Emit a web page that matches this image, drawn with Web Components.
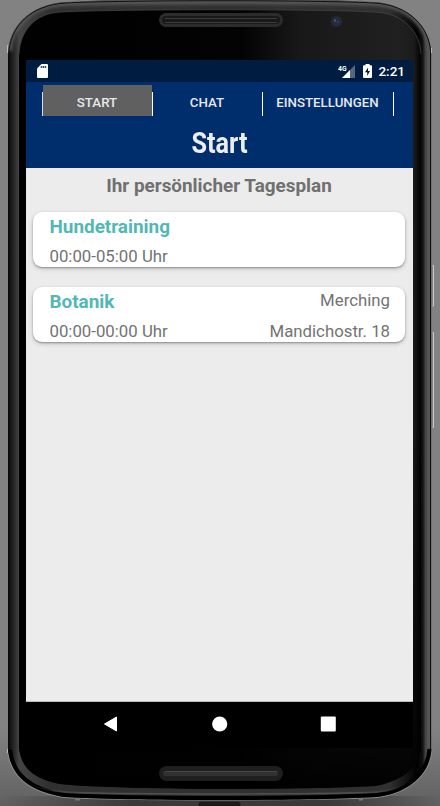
<!DOCTYPE html>
<html lang="de">
<head>
<meta charset="utf-8">
<title>Start</title>
<style>
html,body{margin:0;width:440px;height:806px;overflow:hidden;background:#828282;font-family:Roboto,"Liberation Sans",sans-serif}
</style>
</head>
<body>
<phone-device>
  <status-bar slot="screen" time="2:21"></status-bar>
  <app-header slot="screen" heading="Start">
    <nav-tab active style="width:110px">START</nav-tab>
    <nav-tab style="width:110px">CHAT</nav-tab>
    <nav-tab style="width:131px">EINSTELLUNGEN</nav-tab>
  </app-header>
  <day-plan slot="screen" heading="Ihr persönlicher Tagesplan">
    <plan-card><span slot="title">Hundetraining</span><span slot="time">00:00-05:00 Uhr</span></plan-card>
    <plan-card><span slot="title">Botanik</span><span slot="time">00:00-00:00 Uhr</span><span slot="city">Merching</span><span slot="street">Mandichostr. 18</span></plan-card>
  </day-plan>
  <nav-buttons slot="screen"></nav-buttons>
</phone-device>
<script>
const define = (name, render) => customElements.define(name, class extends HTMLElement {
  constructor() {
    super();
    this.attachShadow({mode: 'open'}).innerHTML = render(this);
  }
});

define('phone-device', () => `
<style>
:host{display:grid;width:440px;height:806px}
svg{grid-area:1/1;display:block}
main{grid-area:1/1;margin:60px 27px 58px 26px;display:flex;flex-direction:column;min-height:0;background:#000;z-index:1}
</style>
<svg width="440" height="806" viewBox="0 0 440 806">
  <defs>
    <linearGradient id="rim" x1="8" x2="432" y1="0" y2="0" gradientUnits="userSpaceOnUse">
      <stop offset="0" stop-color="#080808"/><stop offset=".006" stop-color="#151515"/><stop offset=".019" stop-color="#333"/><stop offset=".026" stop-color="#444"/>
      <stop offset=".1" stop-color="#303030"/><stop offset=".9" stop-color="#303030"/>
      <stop offset=".965" stop-color="#000"/><stop offset=".978" stop-color="#111"/><stop offset=".985" stop-color="#444"/><stop offset=".993" stop-color="#5a5a5a"/><stop offset="1" stop-color="#333"/>
    </linearGradient>
    <linearGradient id="glass" x1="0" x2="440" y1="0" y2="0" gradientUnits="userSpaceOnUse">
      <stop offset="0" stop-color="#000"/><stop offset=".55" stop-color="#030303"/><stop offset=".68" stop-color="#181818"/><stop offset=".9" stop-color="#1f201f"/><stop offset=".94" stop-color="#1b1c1b"/><stop offset=".958" stop-color="#000"/>
    </linearGradient>
    <linearGradient id="fade" x1="0" x2="0" y1="420" y2="800" gradientUnits="userSpaceOnUse">
      <stop offset="0" stop-color="#000" stop-opacity="0"/><stop offset=".85" stop-color="#000" stop-opacity=".8"/><stop offset="1" stop-color="#000"/>
    </linearGradient>
    <linearGradient id="floor" x1="0" x2="0" y1="730" y2="806" gradientUnits="userSpaceOnUse">
      <stop offset="0" stop-color="#828282"/><stop offset="1" stop-color="#606060"/>
    </linearGradient>
    <linearGradient id="under" x1="0" x2="440" y1="0" y2="0" gradientUnits="userSpaceOnUse">
      <stop offset="0" stop-color="#333" stop-opacity="0"/><stop offset=".3" stop-color="#333" stop-opacity=".85"/><stop offset=".75" stop-color="#333" stop-opacity=".85"/><stop offset="1" stop-color="#333" stop-opacity="0"/>
    </linearGradient>
    <linearGradient id="lip" x1="30" x2="410" y1="0" y2="0" gradientUnits="userSpaceOnUse">
      <stop offset="0" stop-color="#555" stop-opacity="0"/><stop offset=".15" stop-color="#505050"/><stop offset=".85" stop-color="#505050"/><stop offset="1" stop-color="#555" stop-opacity="0"/>
    </linearGradient>
    <filter id="soft" x="-10%" y="-20%" width="120%" height="140%"><feGaussianBlur stdDeviation="1.6"/></filter>
    <clipPath id="body"><path id="shape" d="M8 53C9 27 29 4 66 2C120-1 170-2 220-2S320-1 374 2C409 4 430 27 431.500 53V749C430 774 409 793 377 797C340 799 290 800 220 800S100 799 64 797C29 791 11 776 8 750Z"/></clipPath>
  </defs>
  <rect width="440" height="806" fill="#828282"/>
  <rect y="730" width="440" height="76" fill="url(#floor)"/>
  <rect y="796" width="440" height="10" fill="url(#under)"/>
  <path d="M7.500 750C10 777 29 792 64 797.500C110 800.800 330 800.800 377 797.500C409 793.500 430 775 432 750" fill="none" stroke="#8c8c8c" stroke-width="1"/>
  <g clip-path="url(#body)">
    <use href="#shape" fill="url(#rim)"/>
    <path d="M8 51C9 27 29 3 66 2C120 0 320 0 374 2C409 3 430 27 431 51" fill="none" stroke="#555" stroke-width="8" filter="url(#soft)"/>
    <path d="M19 54C20 31 35 13 61 12C120 9 320 9 374 12C404 13 420 32 421 54V748C419 768 404 780 376 786C310 790 120 790 60 784C35 779 21 769 19 747Z" fill="url(#glass)"/>
    <path d="M19 54C20 31 35 13 61 12C120 9 320 9 374 12C404 13 420 32 421 54" fill="none" stroke="#494949" stroke-width=".7"/>
    <path d="M19 420H421V748C419 768 404 780 376 786C310 790 120 790 60 784C35 779 21 769 19 747Z" fill="url(#fade)"/>
    <path d="M8 750C11 776 29 791 64 797C100 799 150 800 220 800S340 799 377 797C409 793 430 774 431.500 749" fill="none" stroke="#000" stroke-width="8"/>
    <path d="M30 784Q45 791 66 792C110 794.500 330 794.500 376 792Q395 791 410 782" fill="none" stroke="url(#lip)" stroke-width="1.500"/>
  </g>
  <path d="M9 53C10 27 30 5 66 3C120 0 320 0 374 3C409 5 429 27 430.500 51V749" fill="none" stroke="#111" stroke-width="1"/>
  <g>
    <rect x="159" y="13" width="124" height="14" rx="7" fill="#2c2c2c"/><rect x="162" y="16" width="118" height="8" rx="4" fill="#191919"/><path d="M165 18.500H277M165 22.500H277" stroke="#3b3b3b"/>
    <rect x="159" y="766" width="124" height="15" rx="7.500" fill="#1f1f1f"/><rect x="163" y="771" width="115" height="5" rx="2.500" fill="#303030"/><path d="M165 771.500H277" stroke="#474747"/>
  </g>
  <circle cx="336.500" cy="21.500" r="5.800" fill="#282828"/><circle cx="336.500" cy="21.500" r="3.700" fill="#202a49"/><circle cx="335" cy="20.500" r="1.200" fill="#3e5582"/><circle cx="338" cy="22" r="1" fill="#34466e"/>
  <path d="M432.500 265.500H433.500V306H432.500M432.500 332.500H433.500V427.500H432.500" fill="none" stroke="#c9c9c9"/>
  <path d="M199 806V803.500Q199 802 201 802H238Q240 802 240 804V806Z" fill="#1c1c1c" stroke="#111" stroke-width=".5"/>
  <path d="M7.500 45V53M431.500 48V53M7.500 749V753" stroke="#bbb"/>
  <path d="M77 .5H81M358 .5H362M75 799.500H80M359 799.500H363" stroke="#777" stroke-width="2"/>
</svg>
<main><slot name="screen"></slot></main>`);

define('status-bar', el => `
<style>
:host{display:flex;height:22px;flex:none;align-items:center;background:#001c41;color:#fff;padding:0 8px 0 11px;box-sizing:border-box}
svg{display:block;flex:none}
.sd{margin-right:auto}
.time{font-size:13.500px;font-weight:500;line-height:22px;margin-left:6px}
</style>
<svg class="sd" width="11" height="14" viewBox="0 0 11 14"><path fill="#fff" d="M4.500 0H10Q11 0 11 1V13Q11 14 10 14H1Q0 14 0 13V4.500Z"/><path d="M4.500 2V4M6.500 2V4M8.500 2V4" stroke="#38506f" stroke-width="1.500"/></svg>
<svg width="18" height="15" viewBox="0 0 18 15"><path d="M17 1V14H4Z" fill="#56677f"/><path d="M12 6V14H4Z" fill="#fff"/><text x="0" y="6.500" font-size="8" font-weight="700" fill="#fff" textLength="8.500" lengthAdjust="spacingAndGlyphs">4G</text></svg>
<svg style="margin-left:7px" width="9" height="14" viewBox="0 0 9 14"><path fill="#fff" d="M2.500 0H6.500V1.300H8Q9 1.300 9 2.300V13Q9 14 8 14H1Q0 14 0 13V2.300Q0 1.300 1 1.300H2.500Z"/><path d="M5 3.500L2 8.300H4.200V12L7 7H5Z" fill="#001c41"/></svg>
<span class="time">${el.getAttribute('time')}</span>`);

define('app-header', el => `
<style>
:host{display:flex;flex-direction:column;flex:none;height:86px;background:#002d6b;color:#ededed;overflow:hidden}
nav{display:flex;margin:3px 0 0 15.500px;height:31px}
nav::before{content:"";width:1px;margin-top:7px;background:#d5dce6}
h1{margin:10px 0 0;font-size:29px;line-height:34px;font-weight:700;text-align:center;transform:scaleX(.87)}
</style>
<nav><slot></slot></nav><h1>${el.getAttribute('heading')}</h1>`);

define('nav-tab', () => `
<style>
:host{display:flex;flex:none;height:31px;font-size:13.300px;font-weight:500;line-height:35px;color:#e6e8ec}
:host([active]) span{background:#606060}
span{flex:1;text-align:center}
:host::after{content:"";width:1px;margin-top:7px;background:#fff}
</style>
<span><slot></slot></span>`);

define('day-plan', el => `
<style>
:host{display:flex;flex-direction:column;flex:none;height:534px;background:#ececec;padding:0 8px 0 7px;box-sizing:border-box;border-bottom:1px solid #bbb}
h2{margin:6px 0 14px;height:24px;font-size:18.900px;line-height:24px;font-weight:700;color:#707070;text-align:center}
section{display:flex;flex-direction:column;gap:19.500px}
</style>
<h2>${el.getAttribute('heading')}</h2><section><slot></slot></section>`);

define('plan-card', () => `
<style>
:host{display:grid;grid-template-columns:1fr auto;grid-template-rows:30px 25px;height:55.300px;box-sizing:border-box;padding:0 15px 0 16.500px;background:#fff;border-radius:9px;box-shadow:0 1px 2px rgba(0,0,0,.32),0 2px 5px rgba(0,0,0,.16);color:#737373;font-size:16.800px;line-height:28px;white-space:nowrap}
b{color:#51b8b5;font-size:18.900px;font-weight:700;line-height:30px}
.right{text-align:right}
.city{line-height:26px}
</style>
<b><slot name="title"></slot></b><div class="right city"><slot name="city"></slot></div>
<div><slot name="time"></slot></div><div class="right"><slot name="street"></slot></div>`);

define('nav-buttons', () => `
<style>
:host{display:flex;flex:1;align-items:center;justify-content:space-between;padding:0 77px 2px 77px}
svg{display:block}
</style>
<svg width="16" height="16" viewBox="0 0 16 16"><path d="M1.500 8L13.500 1V15Z" fill="#fff" stroke="#fff" stroke-width="1" stroke-linejoin="round"/></svg>
<svg width="16" height="16" viewBox="0 0 16 16"><circle cx="7.700" cy="8" r="7.600" fill="#fff"/></svg>
<svg width="16" height="16" viewBox="0 0 16 16"><rect x=".800" y=".500" width="15" height="15" rx="1" fill="#fff"/></svg>`);
</script>
</body>
</html>
